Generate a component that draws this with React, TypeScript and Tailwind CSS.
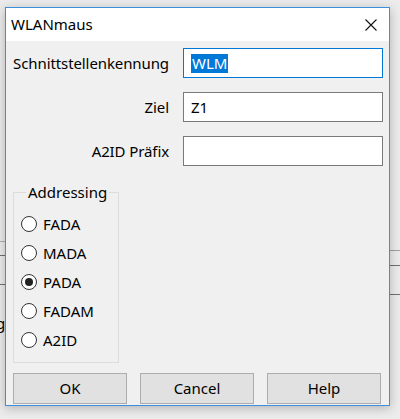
import React from "react";

const font = { fontFamily: '"Noto Sans", "Segoe UI", sans-serif' };

function Radio({ label, checked }: { label: string; checked?: boolean }) {
  return (
    <label className="flex items-center h-[29px] gap-[6px]">
      <span className="w-[16px] h-[16px] rounded-full border border-[#333] bg-white flex items-center justify-center">
        {checked && <span className="w-[8px] h-[8px] rounded-full bg-[#222]" />}
      </span>
      <span className="text-[15px] text-black">{label}</span>
    </label>
  );
}

function Field({ label, value, focused }: { label: string; value?: string; focused?: boolean }) {
  return (
    <div className="flex items-center">
      <div className="w-[164px] text-right text-[15px] tracking-[-0.1px] text-black pr-[1px]">{label}</div>
      <div
        className={`ml-[13px] w-[200px] h-[30px] bg-white border flex items-center px-[7px] text-[15px] ${
          focused ? "border-[#0078d7]" : "border-[#7a7a7a]"
        }`}
      >
        {focused ? (
          <span className="bg-[#0078d7] text-white leading-[19px] px-[1px]">{value}</span>
        ) : (
          <span className="text-black">{value}</span>
        )}
      </div>
    </div>
  );
}

function Button({ children }: { children: React.ReactNode }) {
  return (
    <button className="w-[114px] h-[31px] bg-[#e1e1e1] border border-[#adadad] text-[15px] text-black">
      {children}
    </button>
  );
}

export default function App() {
  return (
    <div className="relative w-[400px] h-[419px] overflow-hidden bg-[#ececec]" style={font}>
      {/* background app behind the dialog */}
      <div className="absolute left-0 top-[241px] w-[6px] h-px bg-[#b0b0b0]" />
      <div className="absolute left-0 top-[255px] w-[6px] h-px bg-[#707070]" />
      <div className="absolute left-0 top-[284px] w-[6px] h-px bg-[#707070]" />
      <div className="absolute left-[-4px] top-[312px] text-[15px] text-black">g</div>
      <div className="absolute right-0 top-[250px] w-[10px] h-px bg-[#a0a0a0]" />
      <div className="absolute right-0 top-[265px] w-[10px] h-px bg-[#707070]" />
      <div className="absolute right-0 top-[294px] w-[10px] h-px bg-[#707070]" />

      <div className="relative pt-[7px] pl-[5px]">
        <div className="w-[385px] h-[399px] border border-[#3c8fdb] bg-[#f0f0f0] shadow-[0_2px_10px_rgba(0,0,0,0.25)] flex flex-col">
          <div className="h-[33px] bg-white flex items-center justify-between pl-[5px] pr-[10px]">
            <span className="text-[15px] text-black">WLANmaus</span>
            <svg width="14" height="14" viewBox="0 0 14 14" className="mr-[1px]">
              <path d="M1.5 1.5 L12.5 12.5 M12.5 1.5 L1.5 12.5" stroke="#111" strokeWidth="1.1" />
            </svg>
          </div>

          <div className="flex flex-col gap-[14px] pt-[7px]">
            <Field label="Schnittstellenkennung" value="WLM" focused />
            <Field label="Ziel" value="Z1" />
            <Field label="A2ID Präfix" value="" />
          </div>

          <fieldset className="ml-[7px] mt-[15px] w-[106px] h-[182px] border border-[#dcdcdc] pl-[7px] pt-[6px]">
            <legend className="ml-[5px] px-[2px] text-[15px] text-black">Addressing</legend>
            <Radio label="FADA" />
            <Radio label="MADA" />
            <Radio label="PADA" checked />
            <Radio label="FADAM" />
            <Radio label="A2ID" />
          </fieldset>

          <div className="flex gap-[13px] ml-[7px] mt-[10px]">
            <Button>OK</Button>
            <Button>Cancel</Button>
            <Button>Help</Button>
          </div>
        </div>
      </div>
    </div>
  );
}
